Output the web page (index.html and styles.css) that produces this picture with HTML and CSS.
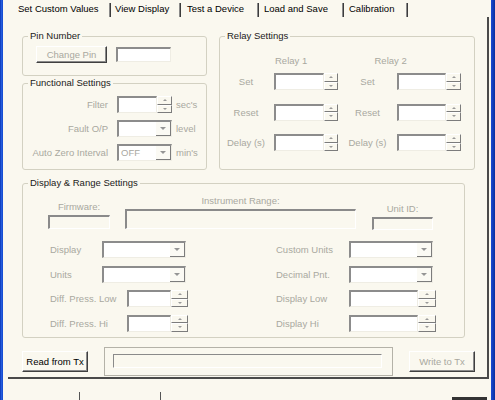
FILE: index.html
```html
<!DOCTYPE html>
<html>
<head>
<meta charset="utf-8">
<title>Set Custom Values</title>
<link rel="stylesheet" href="styles.css">
</head>
<body>
<div class="window">
  <div class="frame-l"></div>
  <div class="main">
    <div class="tabs">
      <div class="tab t1">Set Custom Values</div>
      <div class="tab t2">View Display</div>
      <div class="tab t3">Test a Device</div>
      <div class="tab t4">Load and Save</div>
      <div class="tab t5">Calibration</div>
    </div>
    <div class="panel">
      <div class="top">
        <div class="leftcol">
          <fieldset class="grp pin">
            <legend>Pin Number</legend>
            <div class="pinrow">
              <div class="btn dis pinbtn">Change Pin</div>
              <div class="edit pinfield"></div>
            </div>
          </fieldset>
          <fieldset class="grp func">
            <legend>Functional Settings</legend>
            <div class="frows">
              <div class="frow"><span class="flbl">Filter</span><div class="edit ff"></div><div class="spin"><i class="u"></i><i class="d"></i></div><span class="unit">sec's</span></div>
              <div class="frow"><span class="flbl">Fault O/P</span><div class="combo fc"><span class="val"></span><span class="drop"></span></div><span class="unit">level</span></div>
              <div class="frow"><span class="flbl">Auto Zero Interval</span><div class="combo fc"><span class="val">OFF</span><span class="drop"></span></div><span class="unit">min's</span></div>
            </div>
          </fieldset>
        </div>
        <fieldset class="grp relay">
          <legend>Relay Settings</legend>
          <div class="rhead"><span class="rh">Relay 1</span><span class="rh">Relay 2</span></div>
          <div class="rrows">
            <div class="rrow"><span class="rl1">Set</span><div class="edit rf1"></div><div class="spin rs1"><i class="u"></i><i class="d"></i></div><span class="rl2">Set</span><div class="edit rf2"></div><div class="spin rs2"><i class="u"></i><i class="d"></i></div></div>
            <div class="rrow"><span class="rl1">Reset</span><div class="edit rf1"></div><div class="spin rs1"><i class="u"></i><i class="d"></i></div><span class="rl2">Reset</span><div class="edit rf2"></div><div class="spin rs2"><i class="u"></i><i class="d"></i></div></div>
            <div class="rrow"><span class="rl1">Delay (s)</span><div class="edit rf1"></div><div class="spin rs1"><i class="u"></i><i class="d"></i></div><span class="rl2">Delay (s)</span><div class="edit rf2"></div><div class="spin rs2"><i class="u"></i><i class="d"></i></div></div>
          </div>
        </fieldset>
      </div>
      <fieldset class="grp disp">
        <legend>Display &amp; Range Settings</legend>
        <div class="statrow">
          <div class="scol sfw"><div class="slbl">Firmware:</div><div class="sfield h14"></div></div>
          <div class="scol sir"><div class="slbl">Instrument Range:</div><div class="sfield h20"></div></div>
          <div class="scol suid"><div class="slbl">Unit ID:</div><div class="sfield h13"></div></div>
        </div>
        <div class="drows">
          <div class="drow">
            <div class="dhalf"><span class="dla">Display</span><div class="combo dc"><span class="val"></span><span class="drop"></span></div></div>
            <span class="dlr">Custom Units</span><div class="combo dc"><span class="val"></span><span class="drop"></span></div>
          </div>
          <div class="drow">
            <div class="dhalf"><span class="dla">Units</span><div class="combo dc"><span class="val"></span><span class="drop"></span></div></div>
            <span class="dlr">Decimal Pnt.</span><div class="combo dc"><span class="val"></span><span class="drop"></span></div>
          </div>
          <div class="drow">
            <div class="dhalf"><span class="dlb">Diff. Press. Low</span><div class="edit dfl"></div><div class="spin dsl"><i class="u"></i><i class="d"></i></div></div>
            <span class="dlr">Display Low</span><div class="edit dfr"></div><div class="spin dsr"><i class="u"></i><i class="d"></i></div>
          </div>
          <div class="drow">
            <div class="dhalf"><span class="dlb">Diff. Press. Hi</span><div class="edit dfl"></div><div class="spin dsl"><i class="u"></i><i class="d"></i></div></div>
            <span class="dlr">Display Hi</span><div class="edit dfr"></div><div class="spin dsr"><i class="u"></i><i class="d"></i></div>
          </div>
        </div>
      </fieldset>
      <div class="brow">
        <div class="btn txbtn">Read from Tx</div>
        <div class="progbox"><div class="prog"></div></div>
        <div class="btn dis txbtn">Write to Tx</div>
      </div>
    </div>
    <div class="status">
      <div class="sc sc1"></div>
      <div class="sc sc2"></div>
      <div class="sspace"></div>
      <div class="okedge"></div>
    </div>
  </div>
  <div class="frame-r"></div>
</div>
</body>
</html>
```

FILE: styles.css
```css
* { box-sizing: border-box; }
html, body { margin: 0; padding: 0; }
body {
  width: 495px;
  height: 400px;
  overflow: hidden;
  background: #faf8ef;
  font-family: "Liberation Sans", Arial, sans-serif;
  font-size: 9.5px;
  color: #000;
}
.window { display: flex; height: 400px; }
.frame-l { width: 3px; background: linear-gradient(to right, #0a34b4, #2a64e4 60%, #0a3ec8); }
.frame-r { width: 4px; background: linear-gradient(to right, #1a4ad4, #0a2e9e); }
.main { flex: 1; display: flex; flex-direction: column; min-width: 0; }

/* tabs */
.tabs { display: flex; margin: 3px 0 0 5px; height: 14px; flex-shrink: 0; }
.tab {
  height: 14px;
  line-height: 12px;
  padding-left: 5px;
  white-space: nowrap;
  border-right: 1px solid #3c3c3c;
  box-shadow: inset -1px 0 #8a8a8a;
}
.t1 { width: 103px; padding-left: 10px; }
.t2 { width: 70px; padding-left: 4px; }
.t3 { width: 78px; padding-left: 6px; }
.t4 { width: 85px; }
.t5 { width: 64px; }

/* panel */
.panel {
  margin: 0 2px 0 5px;
  height: 362px;
  flex-shrink: 0;
  overflow: hidden;
  border-right: 2px solid #4a4a4a;
  border-bottom: 2px solid #4a4a4a;
  padding: 13px 0 0 14px;
}
.top { display: flex; gap: 12px; }
.leftcol { width: 185px; display: flex; flex-direction: column; }

.grp {
  margin: 0;
  padding: 0;
  border: 1px solid #d3d1c2;
  border-radius: 3px;
  min-width: 0;
}
legend {
  margin-left: 5px;
  padding: 0 2px;
  line-height: 12px;
  color: #1a1a1a;
}

/* common controls */
.btn {
  display: flex;
  align-items: center;
  justify-content: center;
  border: 1px solid;
  border-color: #ffffff #404040 #404040 #ffffff;
  box-shadow: inset -1px -1px #8a8a8a;
  white-space: nowrap;
}
.dis { color: #a9a89f; }
.edit {
  height: 17px;
  background: #ffffff;
  border-style: solid;
  border-width: 2px 1px 1px 2px;
  border-color: #8c8c8c #efede4 #efede4 #8c8c8c;
}
.combo {
  display: flex;
  height: 17px;
  background: #ffffff;
  border-style: solid;
  border-width: 2px 1px 1px 2px;
  border-color: #8c8c8c #efede4 #efede4 #8c8c8c;
}
.combo .val { flex: 1; padding-left: 2px; line-height: 14px; color: #a9a89f; }
.combo .drop {
  width: 15px;
  display: flex;
  align-items: center;
  justify-content: center;
  background: #fbfaf4;
  border-right: 1px solid #7c7c7c;
  border-bottom: 1px solid #7c7c7c;
}
.combo .drop::after {
  content: "";
  border-left: 3px solid transparent;
  border-right: 3px solid transparent;
  border-top: 3px solid #959595;
}
.spin { display: flex; flex-direction: column; height: 17px; }
.spin i {
  flex: 1;
  display: flex;
  align-items: center;
  justify-content: center;
  border-style: solid;
  border-width: 1px;
  border-color: #ffffff #7c7c7c #7c7c7c #ffffff;
}
.spin i::after {
  content: "";
  border-left: 2px solid transparent;
  border-right: 2px solid transparent;
}
.spin .u::after { border-bottom: 2px solid #9a9a9a; }
.spin .d::after { border-top: 2px solid #9a9a9a; }

/* pin number */
.pin { height: 46px; }
.pinrow { display: flex; align-items: center; margin-top: 4px; padding-left: 13px; gap: 9px; }
.pinbtn { width: 71px; height: 17px; }
.pinfield { width: 55px; height: 15px; }

/* functional */
.func { height: 93px; margin-top: 1px; }
.frows { padding-top: 7px; display: flex; flex-direction: column; gap: 7px; }
.frow { display: flex; align-items: center; height: 17px; }
.flbl { width: 85px; margin-right: 9px; text-align: right; color: #a9a89f; white-space: nowrap; }
.ff { width: 40px; }
.frow .spin { width: 15px; }
.fc { width: 55px; }
.unit { margin-left: 4px; color: #a9a89f; }

/* relay */
.relay { width: 256px; height: 140px; }
.rhead { display: flex; margin-top: 13px; padding-left: 55px; line-height: 12px; color: #a9a89f; }
.rh { width: 122px; }
.rrows { margin-top: 6px; display: flex; flex-direction: column; gap: 13.5px; }
.rrow { display: flex; align-items: center; height: 17px; padding-left: 2px; color: #a9a89f; }
.rl1 { width: 48px; margin-right: 4px; text-align: center; white-space: nowrap; }
.rl2 { width: 59px; text-align: center; white-space: nowrap; }
.rf1 { width: 50px; }
.rs1 { width: 14px; }
.rf2 { width: 49px; }
.rs2 { width: 15px; }

/* display & range */
.disp { width: 443px; height: 161px; margin-top: 7px; }
.statrow { display: flex; align-items: flex-start; }
.scol { display: flex; flex-direction: column; gap: 2px; }
.slbl { line-height: 12px; text-align: center; color: #a9a89f; white-space: nowrap; }
.sfw { width: 62px; margin: 12px 0 0 25px; }
.sir { width: 231px; margin: 6px 0 0 15px; }
.suid { width: 61px; margin: 14px 0 0 16px; }
.sfield {
  border-style: solid;
  border-width: 2px 1px 1px 2px;
  border-color: #8a8a8a #ffffff #ffffff #8a8a8a;
}
.h13 { height: 13px; }
.h14 { height: 14px; }
.h20 { height: 20px; }
.drows { margin-top: 11px; display: flex; flex-direction: column; gap: 7.5px; }
.drow { display: flex; align-items: center; height: 17px; padding-left: 27px; color: #a9a89f; }
.dhalf { width: 226px; display: flex; align-items: center; }
.dla { width: 52px; }
.dlb { width: 77px; white-space: nowrap; }
.dlr { width: 73px; white-space: nowrap; }
.dc { width: 84px; }
.dfl { width: 44px; }
.dsl { width: 17px; }
.dfr { width: 69px; }
.dsr { width: 18px; }

/* bottom row */
.brow { display: flex; align-items: center; gap: 16px; height: 29px; margin-top: 9px; }
.txbtn { width: 66px; height: 21px; }
.progbox {
  width: 289px;
  height: 29px;
  border: 1px solid #b4b2a8;
  padding: 6px 10px 8px 8px;
}
.prog {
  height: 14px;
  border-style: solid;
  border-width: 1px;
  border-color: #8a8a8a #ffffff #ffffff #8a8a8a;
}

/* status strip */
.status { display: flex; align-items: flex-end; height: 21px; flex-shrink: 0; }
.sc { height: 8px; border-right: 1px solid #555555; }
.sc1 { width: 77px; }
.sc2 { width: 81px; }
.sspace { flex: 1; }
.okedge { width: 35px; height: 3px; margin-right: 4px; background: #333333; }
```
